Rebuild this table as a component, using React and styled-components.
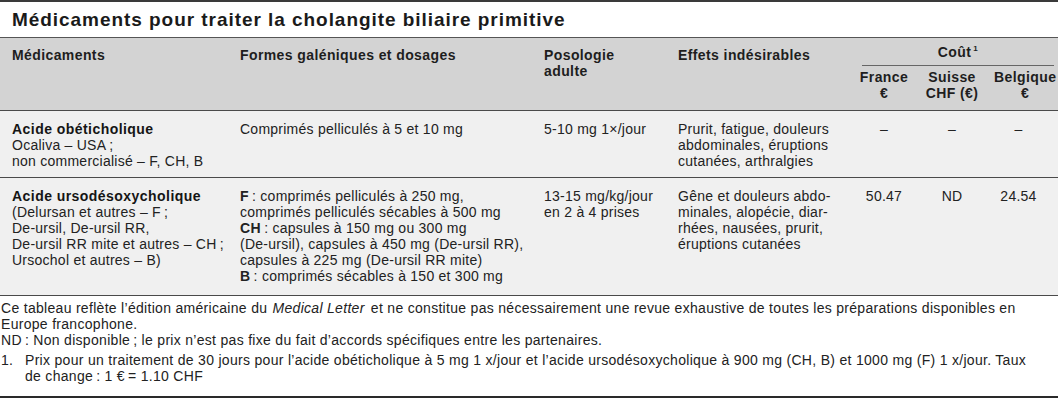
import React from 'react';
import styled, { createGlobalStyle } from 'styled-components';

const GlobalStyle = createGlobalStyle`
  html, body {
    margin: 0;
    padding: 0;
    background: #ffffff;
  }
  body {
    font-family: "Liberation Sans", Arial, sans-serif;
    color: #1e1e1e;
  }
`;

const Page = styled.div`
  width: 1058px;
  border-top: 2px solid #3a3a3a;
  border-bottom: 2px solid #2a2a2a;
`;

const Title = styled.h1`
  margin: 0;
  height: 35px;
  padding-left: 12px;
  font-size: 19px;
  font-weight: bold;
  letter-spacing: 0.95px;
  line-height: 35px;
  color: #1a1a1a;
  border-bottom: 1.5px solid #555;
`;

const Table = styled.table`
  width: 1058px;
  border-collapse: collapse;
  table-layout: fixed;
  font-size: 14px;
  letter-spacing: 0.25px;
  line-height: 16px;
`;

const Head = styled.thead`
  background: #d3d3d3;
`;

const HeadRow = styled.tr`
  height: ${(p) => p.$h}px;
`;

const Th = styled.th`
  padding: ${(p) => p.$pad || '9px 3px 0'};
  padding-left: ${(p) => (p.$first ? '12px' : undefined)};
  text-align: ${(p) => (p.$center ? 'center' : 'left')};
  vertical-align: top;
  font-weight: bold;
  letter-spacing: 0.4px;
  color: #1e1e1e;
  border-bottom: ${(p) => (p.$last ? '1.5px solid #4a4a4a' : 'none')};
`;

const CostLabel = styled.div`
  margin: 0 4px 0 6px;
  padding-bottom: 5px;
  border-bottom: 1px solid #666;
`;

const Sup = styled.sup`
  font-size: 8px;
  line-height: 0;
  margin-left: 2px;
  vertical-align: 6px;
`;

const Row = styled.tr`
  height: ${(p) => p.$h}px;
  background: #f0f0f0;
  border-bottom: 1.5px solid #4a4a4a;
`;

const Td = styled.td`
  padding: 10px 3px 0;
  padding-left: ${(p) => (p.$first ? '12px' : undefined)};
  padding-right: ${(p) => (p.$pr ? `${p.$pr}px` : undefined)};
  text-align: ${(p) => (p.$center ? 'center' : 'left')};
  vertical-align: top;
  color: #222;
`;

const Drug = styled.div`
  font-weight: bold;
  letter-spacing: 0.45px;
  color: #151515;
`;

const Line = styled.div`
  white-space: nowrap;
  b {
    letter-spacing: 0.45px;
  }
`;

const Notes = styled.div`
  padding: 4px 26px 12px 1px;
  font-size: 14px;
  letter-spacing: 0.3px;
  line-height: 16px;
  color: #222;
`;

const Note = styled.p`
  margin: 0;
`;

const Journal = styled.i`
  display: inline-block;
  margin: 0 2px 0 1px;
`;

const Footnote = styled.div`
  display: flex;
  margin-top: 4px;
`;

const FootMark = styled.span`
  flex: 0 0 24px;
`;

const cols = [237, 304, 134, 181, 56, 80, 66];
const t = '\u2009';

const rows = [
  {
    h: 67,
    drug: 'Acide obéticholique',
    names: [`Ocaliva – USA${t};`, 'non commercialisé – F, CH, B'],
    forms: ['Comprimés pelliculés à 5 et 10 mg'],
    dose: ['5-10 mg 1×/jour'],
    effects: ['Prurit, fatigue, douleurs', 'abdominales, éruptions', 'cutanées, arthralgies'],
    cost: ['–', '–', '–'],
  },
  {
    h: 118,
    drug: 'Acide ursodésoxycholique',
    names: [
      `(Delursan et autres – F${t};`,
      'De-ursil, De-ursil RR,',
      `De-ursil RR mite et autres – CH${t};`,
      'Ursochol et autres – B)',
    ],
    forms: [
      <><b>F</b>{`${t}: comprimés pelliculés à 250 mg,`}</>,
      'comprimés pelliculés sécables à 500 mg',
      <><b>CH</b>{`${t}: capsules à 150 mg ou 300 mg`}</>,
      '(De-ursil), capsules à 450 mg (De-ursil RR),',
      'capsules à 225 mg (De-ursil RR mite)',
      <><b>B</b>{`${t}: comprimés sécables à 150 et 300 mg`}</>,
    ],
    dose: ['13-15 mg/kg/jour', 'en 2 à 4 prises'],
    effects: ['Gêne et douleurs abdo-', 'minales, alopécie, diar-', 'rhées, nausées, prurit,', 'éruptions cutanées'],
    cost: ['50.47', 'ND', '24.54'],
  },
];

const ndNote = `ND${t}: Non disponible${t}; le prix n’est pas fixe du fait d’accords spécifiques entre les partenaires.`;
const footnote = `Prix pour un traitement de 30 jours pour l’acide obéticholique à 5 mg 1 x/jour et l’acide ursodésoxycholique à 900 mg (CH, B) et 1000 mg (F) 1 x/jour. Taux de change${t}: 1 €${t}= 1.10 CHF`;

const Lines = ({ items }) => items.map((x, i) => <Line key={i}>{x}</Line>);

export default function App() {
  return (
    <Page>
      <GlobalStyle />
      <Title>Médicaments pour traiter la cholangite biliaire primitive</Title>
      <Table>
        <colgroup>
          {cols.map((w, i) => <col key={i} style={{ width: w }} />)}
        </colgroup>
        <Head>
          <HeadRow $h={28}>
            <Th $first $last rowSpan={2}>Médicaments</Th>
            <Th $last rowSpan={2}>Formes galéniques et dosages</Th>
            <Th $last rowSpan={2}>Posologie<br />adulte</Th>
            <Th $last rowSpan={2}>Effets indésirables</Th>
            <Th $center $pad="6px 0 0" colSpan={3}>
              <CostLabel>Coût<Sup>1</Sup></CostLabel>
            </Th>
          </HeadRow>
          <HeadRow $h={44}>
            <Th $pad="3px 2px 0" $center $last>France<br />€</Th>
            <Th $pad="3px 2px 0" $center $last>Suisse<br />CHF (€)</Th>
            <Th $pad="3px 2px 0" $center $last>Belgique<br />€</Th>
          </HeadRow>
        </Head>
        <tbody>
          {rows.map((r) => (
            <Row key={r.drug} $h={r.h}>
              <Td $first>
                <Drug>{r.drug}</Drug>
                <Lines items={r.names} />
              </Td>
              <Td><Lines items={r.forms} /></Td>
              <Td><Lines items={r.dose} /></Td>
              <Td><Lines items={r.effects} /></Td>
              <Td $center>{r.cost[0]}</Td>
              <Td $center>{r.cost[1]}</Td>
              <Td $center $pr={16}>{r.cost[2]}</Td>
            </Row>
          ))}
        </tbody>
      </Table>
      <Notes>
        <Note>
          Ce tableau reflète l’édition américaine du <Journal>Medical Letter</Journal> et ne constitue pas nécessairement une revue exhaustive de toutes les préparations disponibles en Europe francophone.
        </Note>
        <Note>{ndNote}</Note>
        <Footnote>
          <FootMark>1.</FootMark>
          <span>{footnote}</span>
        </Footnote>
      </Notes>
    </Page>
  );
}
